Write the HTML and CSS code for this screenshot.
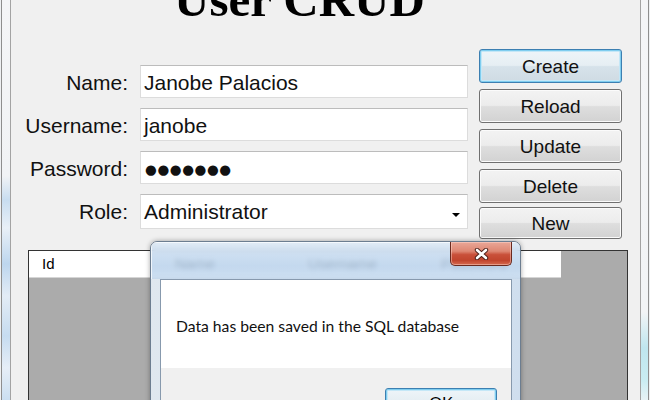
FILE: index.html
```html
<!DOCTYPE html>
<html>
<head>
<meta charset="utf-8">
<title>User CRUD</title>
<link rel="stylesheet" href="styles.css">
</head>
<body>
<div class="window">
  <div class="frame frame-l"></div>
  <div class="client">
    <h1 class="title"><span>User CRUD</span></h1>
    <div class="form">
      <div class="fields">
        <div class="row"><label class="lbl">Name:</label><div class="box">Janobe Palacios</div></div>
        <div class="row"><label class="lbl">Username:</label><div class="box">janobe</div></div>
        <div class="row"><label class="lbl">Password:</label><div class="box pass">●●●●●●●</div></div>
        <div class="row"><label class="lbl">Role:</label><div class="box combo"><span>Administrator</span><span class="arrow"></span></div></div>
      </div>
      <div class="buttons">
        <div class="btn default">Create</div>
        <div class="btn">Reload</div>
        <div class="btn">Update</div>
        <div class="btn">Delete</div>
        <div class="btn last">New</div>
      </div>
    </div>
    <div class="grid">
      <div class="grid-head">
        <div class="hcell">Id</div>
        <div class="hcell">Name</div>
        <div class="hcell">Username</div>
        <div class="hcell">Password</div>
      </div>
    </div>
  </div>
  <div class="frame frame-r"></div>
</div>

<div class="dlg">
  <div class="dlg-title">
    <div class="close">
      <svg width="15" height="12" viewBox="0 0 15 12">
        <path d="M3 2 L12 10 M12 2 L3 10" stroke="#4a1f18" stroke-width="4.4" stroke-linecap="round" fill="none"/>
        <path d="M3 2 L12 10 M12 2 L3 10" stroke="#ffffff" stroke-width="2.6" stroke-linecap="round" fill="none"/>
      </svg>
    </div>
  </div>
  <div class="dlg-frame">
    <div class="dlg-body">
      <div class="msg">Data has been saved in the SQL database</div>
      <div class="dlg-foot">
        <div class="ok">OK</div>
      </div>
    </div>
  </div>
</div>
</body>
</html>
```

FILE: styles.css
```css
html, body {
  margin: 0;
  padding: 0;
}
body {
  width: 650px;
  height: 400px;
  overflow: hidden;
  position: relative;
  background: #eef0f2;
  font-family: "Liberation Sans", Arial, sans-serif;
  color: #000;
}

.window {
  display: flex;
  margin-left: 1px;
  width: 648px;
  height: 400px;
  box-sizing: border-box;
  border-left: 1px solid #8e8e8e;
  border-right: 1px solid #8e8e8e;
}
.frame {
  flex: none;
}
.frame-l {
  width: 8px;
  background: linear-gradient(to bottom, #f4f5f7 0%, #f1f3f5 44%, #c8ddf0 50%, #e9f0f7 57%, #bdd6ee 66%, #e3ecf6 74%, #c6dcf0 84%, #e6eef7 92%, #cbdff1 100%);
}
.frame-r {
  width: 7px;
  background: linear-gradient(to bottom, #f4f5f7 0%, #f2f4f6 78%, #bfe6ef 87%, #c9ecf2 95%, #e8f3f6 100%);
}
.client {
  flex: 1;
  background: #f0f0f0;
  border-left: 1px solid #a3a3a3;
  border-right: 1px solid #a3a3a3;
}

.title {
  display: flow-root;
  margin: 0;
  height: 49px;
  padding-left: 163px;
  font-family: "Liberation Serif", "Times New Roman", serif;
  font-weight: bold;
  font-size: 49px;
  line-height: 49px;
}
.title span {
  display: block;
  margin-top: -25px;
}

.form {
  display: flex;
  align-items: flex-start;
}
.fields {
  width: 457px;
  padding-top: 16px;
  display: flex;
  flex-direction: column;
  gap: 10px;
}
.row {
  display: flex;
  gap: 12px;
}
.lbl {
  width: 117px;
  flex: none;
  text-align: right;
  font-size: 21px;
  line-height: 28px;
  padding-top: 4px;
  height: 29px;
  color: #111;
}
.box {
  flex: 1;
  height: 33px;
  box-sizing: border-box;
  background: #fff;
  border: 1px solid #dcdcdc;
  border-top-color: #bcbcbc;
  padding: 3px 3px 0;
  font-size: 21px;
  line-height: 28px;
  white-space: nowrap;
  color: #111;
}
.pass {
  font-family: "DejaVu Sans", sans-serif;
  font-size: 13.5px;
  letter-spacing: 0.6px;
  line-height: 29px;
  padding-left: 4px;
}
.combo {
  height: 35px;
  display: flex;
  justify-content: space-between;
  align-items: flex-start;
  padding-right: 7px;
}
.arrow {
  width: 0;
  height: 0;
  margin-top: 15px;
  border-left: 4px solid transparent;
  border-right: 4px solid transparent;
  border-top: 4px solid #000;
}

.buttons {
  margin-left: 11px;
  width: 143px;
  display: flex;
  flex-direction: column;
  gap: 6px;
}
.btn {
  height: 34px;
  box-sizing: border-box;
  border: 1px solid #707070;
  border-radius: 3px;
  background: linear-gradient(to bottom, #f3f3f3 0%, #ececec 48%, #dedede 52%, #d2d2d2 100%);
  box-shadow: inset 0 0 0 1px #fbfbfb;
  text-align: center;
  font-size: 19px;
  line-height: 33px;
  color: #111;
}
.btn.default {
  border-color: #3c7fb1;
  box-shadow: inset 0 0 0 1px #7fcdef, inset 0 0 0 2px #c4e7f7;
  background: linear-gradient(to bottom, #eef5f9 0%, #e6eef3 48%, #d6e2ea 52%, #cfdbe3 100%);
}
.btn.last {
  height: 32px;
  margin-top: -2px;
  line-height: 31px;
}

.grid {
  margin: 11px 12px 0 17px;
  height: 200px;
  background: #ababab;
  border: 1px solid #333;
  border-bottom: none;
}
.grid-head {
  display: flex;
  width: 532px;
  height: 26px;
  background: #fff;
  border-bottom: 1px solid #d5d5d5;
}
.hcell {
  width: 133px;
  box-sizing: border-box;
  padding-left: 13px;
  font-size: 15px;
  line-height: 26px;
}

/* Message box dialog (overlay) */
.dlg {
  position: absolute;
  left: 150px;
  top: 241px;
  width: 371px;
  height: 180px;
  box-sizing: border-box;
  border: 1px solid #6c7d90;
  border-radius: 7px 7px 0 0;
  overflow: hidden;
  display: flex;
  flex-direction: column;
  box-shadow: 0 0 5px rgba(0, 0, 0, 0.35);
}
.dlg-title {
  height: 37px;
  flex: none;
  display: flex;
  justify-content: flex-end;
  align-items: flex-start;
  padding-right: 8px;
  background: linear-gradient(to bottom, rgba(222, 234, 246, 0.86) 0%, rgba(196, 217, 239, 0.86) 35%, rgba(186, 210, 235, 0.86) 65%, rgba(200, 220, 240, 0.9) 100%);
  backdrop-filter: blur(2.5px);
  -webkit-backdrop-filter: blur(2.5px);
  box-shadow: inset 1px 1px 0 rgba(250, 252, 255, 0.8);
}
.close {
  width: 62px;
  height: 24px;
  box-sizing: border-box;
  border: 1px solid #6a2a1f;
  border-top: none;
  border-radius: 0 0 5px 5px;
  background: linear-gradient(to bottom, #e9a798 0%, #de8773 40%, #c9503a 55%, #c1452e 80%, #d66a4f 100%);
  box-shadow: inset 0 0 0 1px rgba(255, 220, 210, 0.45);
  display: flex;
  align-items: center;
  justify-content: center;
}
.close svg {
  display: block;
}
.dlg-frame {
  flex: 1;
  padding: 0 8px 0 9px;
  background: linear-gradient(to right, #dfe7ef 0%, #d3e1ee 40%, #dbe6f1 70%, #cfdeee 100%);
}
.dlg-body {
  border: 1px solid #8799ad;
  border-bottom: none;
  background: #f0f0f0;
  height: 150px;
}
.msg {
  height: 88px;
  box-sizing: border-box;
  background: #fff;
  padding: 36px 0 0 15px;
  font-family: Lato, "Open Sans", sans-serif;
  font-size: 15.7px;
  line-height: 20px;
  color: #111;
}
.dlg-foot {
  display: flex;
  justify-content: flex-end;
  padding: 20px 14px 0 0;
}
.ok {
  width: 112px;
  height: 26px;
  box-sizing: border-box;
  border: 1px solid #3c7fb1;
  border-radius: 3px;
  box-shadow: inset 0 0 0 1px #7fcdef, inset 0 0 0 2px #c4e7f7;
  background: linear-gradient(to bottom, #eef5f9 0%, #e6eef3 48%, #d6e2ea 52%, #cfdbe3 100%);
  text-align: center;
  font-family: Lato, "Open Sans", sans-serif;
  font-size: 16px;
  line-height: 26px;
}
```
